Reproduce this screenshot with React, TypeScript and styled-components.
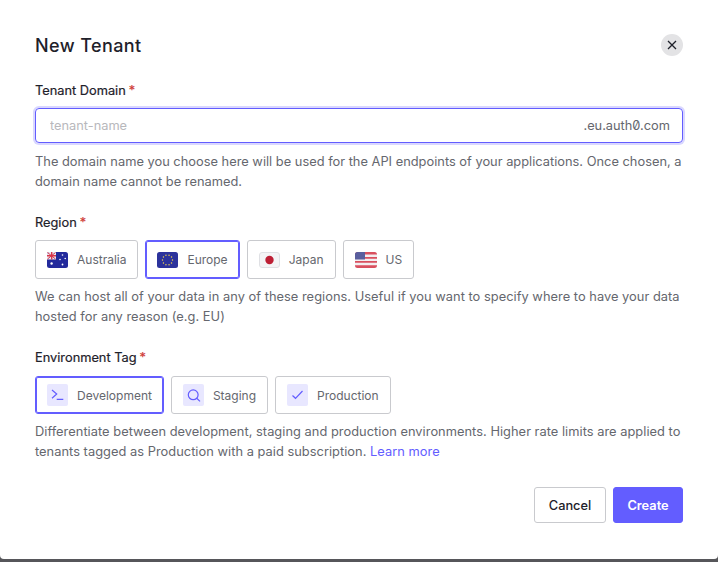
import { ReactNode, useState } from "react";
import styled, { createGlobalStyle } from "styled-components";

const GlobalStyle = createGlobalStyle`
  html, body {
    margin: 0;
    height: 100%;
    background: #56565a;
    overflow: hidden;
  }
  * {
    box-sizing: border-box;
  }
`;

const Modal = styled.div`
  width: 718px;
  height: 559px;
  padding: 33px 35px 0;
  background: #fff;
  border-radius: 0 0 4px 4px;
  font-family: Inter, "Liberation Sans", sans-serif;
  color: #1e212a;
`;

const Header = styled.header`
  display: flex;
  align-items: center;
  justify-content: space-between;
  height: 23px;
  margin-bottom: 26px;
`;

const Title = styled.h1`
  margin: 0;
  font-size: 18px;
  line-height: 25px;
  height: 23px;
  font-weight: 500;
  letter-spacing: 0.4px;
`;

const CloseButton = styled.button`
  display: flex;
  align-items: center;
  justify-content: center;
  width: 22px;
  height: 22px;
  padding: 0;
  border: 0;
  border-radius: 50%;
  background: #e3e3e5;
  color: #1e212a;
`;

const Field = styled.section`
  margin-bottom: 22px;
`;

const Label = styled.label<{ $gap?: number }>`
  display: block;
  height: 16px;
  margin-bottom: ${(props) => props.$gap ?? 10}px;
  font-size: 12.8px;
  line-height: 18px;
  font-weight: 400;
  -webkit-text-stroke: 0.2px currentColor;
`;

const Required = styled.span`
  margin-left: 3px;
  color: #d03c38;
`;

const InputBox = styled.div`
  display: flex;
  align-items: center;
  height: 35px;
  padding: 0 0 0 14px;
  border: 1.5px solid #635dff;
  border-radius: 4px;
  box-shadow: 0 0 0 2px #d9d7ff;
`;

const Input = styled.input`
  flex: 1;
  min-width: 0;
  padding: 0;
  border: 0;
  outline: 0;
  background: transparent;
  font: 400 12.8px Inter, "Liberation Sans", sans-serif;
  color: #1e212a;

  &::placeholder {
    color: #b8b8bc;
    opacity: 1;
  }
`;

const Suffix = styled.span`
  padding-right: 12px;
  font-size: 12.8px;
  font-feature-settings: "zero";
  color: #65676e;
`;

const Help = styled.p<{ $tight?: boolean }>`
  margin: ${(props) => (props.$tight ? 8 : 9)}px 0 0;
  font-size: 12.85px;
  line-height: 20px;
  letter-spacing: ${(props) => (props.$tight ? "0.025px" : "0")};
  color: #65676e;
`;

const Options = styled.div`
  display: flex;
  gap: 7px;
`;

const Option = styled.button<{ $selected: boolean; $tall?: boolean }>`
  display: flex;
  align-items: center;
  gap: 9px;
  height: ${(props) => (props.$tall ? "38px" : "39px")};
  padding: 0 11px;
  background: #fff;
  border: 1px solid #c9cace;
  border-radius: 3px;
  box-shadow: ${(props) => (props.$selected ? "inset 0 0 0 1px #635dff" : "none")};
  border-color: ${(props) => (props.$selected ? "#635dff" : "#c9cace")};
  font: 400 12px Inter, "Liberation Sans", sans-serif;
  color: #65676e;
`;

const EnvIcon = styled.svg`
  display: block;
  width: 21px;
  height: 22px;
  flex: none;
  background: #e8e7ff;
  border-radius: 2px;
  fill: none;
  stroke: #635dff;
  stroke-width: 1.2;
`;

const LearnMore = styled.a`
  color: #635dff;
  text-decoration: none;
`;

const Footer = styled.footer`
  display: flex;
  justify-content: flex-end;
  gap: 7px;
  margin-top: 25px;
`;

const Button = styled.button<{ $primary?: boolean }>`
  height: 36px;
  padding: 0;
  width: ${(props) => (props.$primary ? "70px" : "72px")};
  border: 1px solid ${(props) => (props.$primary ? "#635dff" : "#c9cace")};
  border-radius: 3px;
  background: ${(props) => (props.$primary ? "#635dff" : "#fff")};
  color: ${(props) => (props.$primary ? "#fff" : "#1e212a")};
  font: ${(props) => (props.$primary ? 600 : 500)} 12.8px Inter, "Liberation Sans", sans-serif;
`;

const Flag = styled.svg<{ $wide?: boolean }>`
  display: block;
  width: ${(props) => (props.$wide ? "22px" : "21px")};
  height: 16px;
  flex: none;
`;

function AustraliaFlag() {
  return (
    <Flag viewBox="0 0 21 16">
      <rect width="21" height="16" rx="2.5" fill="#232a9c" />
      <path d="M0 2.5A2.5 2.5 0 0 1 2.5 0H9v7.5H0z" fill="#e9e6ef" />
      <path d="M4 0h1.4v7.5H4zM0 3h9v1.4H0z" fill="#d9354a" />
      <path d="M.5 .5 8.5 7M8.5 .5 .5 7" stroke="#d9354a" strokeWidth="1" />
      <g fill="#fff">
        <circle cx="4.6" cy="11.5" r="1.2" />
        <circle cx="15.5" cy="3" r=".8" />
        <circle cx="18.2" cy="6.5" r=".8" />
        <circle cx="13" cy="7.5" r=".8" />
        <circle cx="15.5" cy="12.5" r=".9" />
      </g>
    </Flag>
  );
}

function EuropeFlag() {
  const stars = Array.from({ length: 10 }, (_, i) => {
    const angle = (i * Math.PI) / 5;
    return { x: 10.5 + Math.cos(angle) * 5, y: 8 + Math.sin(angle) * 5 };
  });
  return (
    <Flag viewBox="0 0 21 16">
      <rect width="21" height="16" rx="2.5" fill="#2c339c" />
      {stars.map((star) => (
        <circle key={star.x + "-" + star.y} cx={star.x} cy={star.y} r=".7" fill="#f5d64a" />
      ))}
    </Flag>
  );
}

function JapanFlag() {
  return (
    <Flag viewBox="0 0 21 16">
      <rect x=".5" y=".5" width="20" height="15" rx="2.5" fill="#f4f4f6" stroke="#dfe0e4" />
      <circle cx="10.5" cy="8" r="4.2" fill="#bd1f35" />
    </Flag>
  );
}

function UsFlag() {
  return (
    <Flag $wide viewBox="0 0 22 16">
      <rect width="22" height="16" rx="2.5" fill="#f3eef0" />
      <path d="M0 2.5A2.5 2.5 0 0 1 2.5 0h17A2.5 2.5 0 0 1 22 2.5z" fill="#d9505f" />
      <path d="M0 5h22v1.7H0zM0 9h22v1.7H0z" fill="#d9505f" />
      <path d="M0 13.3h22A2.5 2.5 0 0 1 19.5 16h-17A2.5 2.5 0 0 1 0 13.3z" fill="#d9505f" />
      <path d="M0 2.5A2.5 2.5 0 0 1 2.5 0H10v7.5H0z" fill="#5a5f9e" />
    </Flag>
  );
}

function TerminalIcon() {
  return (
    <EnvIcon viewBox="0 0 21 22">
      <path d="M5 6 9.7 10 5 14.3M9.7 15.4h6.6" />
    </EnvIcon>
  );
}

function SearchIcon() {
  return (
    <EnvIcon viewBox="0 0 21 22">
      <circle cx="10.2" cy="10.8" r="4.9" />
      <path d="M13.7 14.3 17 17.4" />
    </EnvIcon>
  );
}

function CheckIcon() {
  return (
    <EnvIcon viewBox="0 0 21 22">
      <path d="M5.5 11.5 8.5 14.3 15.5 7" />
    </EnvIcon>
  );
}

const regions: { name: string; flag: ReactNode }[] = [
  { name: "Australia", flag: <AustraliaFlag /> },
  { name: "Europe", flag: <EuropeFlag /> },
  { name: "Japan", flag: <JapanFlag /> },
  { name: "US", flag: <UsFlag /> },
];

const environments: { name: string; icon: ReactNode }[] = [
  { name: "Development", icon: <TerminalIcon /> },
  { name: "Staging", icon: <SearchIcon /> },
  { name: "Production", icon: <CheckIcon /> },
];

function App() {
  const [region, setRegion] = useState("Europe");
  const [environment, setEnvironment] = useState("Development");

  return (
    <Modal>
      <GlobalStyle />
      <Header>
        <Title>New Tenant</Title>
        <CloseButton aria-label="Close">
          <svg width="10" height="10" viewBox="0 0 10 10" fill="none" stroke="currentColor" strokeWidth="1.3">
            <path d="M1 1l8 8M9 1 1 9" />
          </svg>
        </CloseButton>
      </Header>

      <Field>
        <Label>
          Tenant Domain<Required>*</Required>
        </Label>
        <InputBox>
          <Input placeholder="tenant-name" />
          <Suffix>.eu.auth0.com</Suffix>
        </InputBox>
        <Help>
          The domain name you choose here will be used for the API endpoints of your applications. Once chosen, a
          domain name cannot be renamed.
        </Help>
      </Field>

      <Field>
        <Label>
          Region<Required>*</Required>
        </Label>
        <Options>
          {regions.map((item) => (
            <Option key={item.name} $selected={region === item.name} onClick={() => setRegion(item.name)}>
              {item.flag}
              {item.name}
            </Option>
          ))}
        </Options>
        <Help $tight>
          We can host all of your data in any of these regions. Useful if you want to specify where to have your data
          hosted for any reason (e.g. EU)
        </Help>
      </Field>

      <Field>
        <Label $gap={11}>
          Environment Tag<Required>*</Required>
        </Label>
        <Options>
          {environments.map((item) => (
            <Option
              key={item.name}
              $tall
              $selected={environment === item.name}
              onClick={() => setEnvironment(item.name)}
            >
              {item.icon}
              {item.name}
            </Option>
          ))}
        </Options>
        <Help $tight>
          Differentiate between development, staging and production environments. Higher rate limits are applied to
          tenants tagged as Production with a paid subscription. <LearnMore href="#">Learn more</LearnMore>
        </Help>
      </Field>

      <Footer>
        <Button>Cancel</Button>
        <Button $primary>Create</Button>
      </Footer>
    </Modal>
  );
}

export default App;
